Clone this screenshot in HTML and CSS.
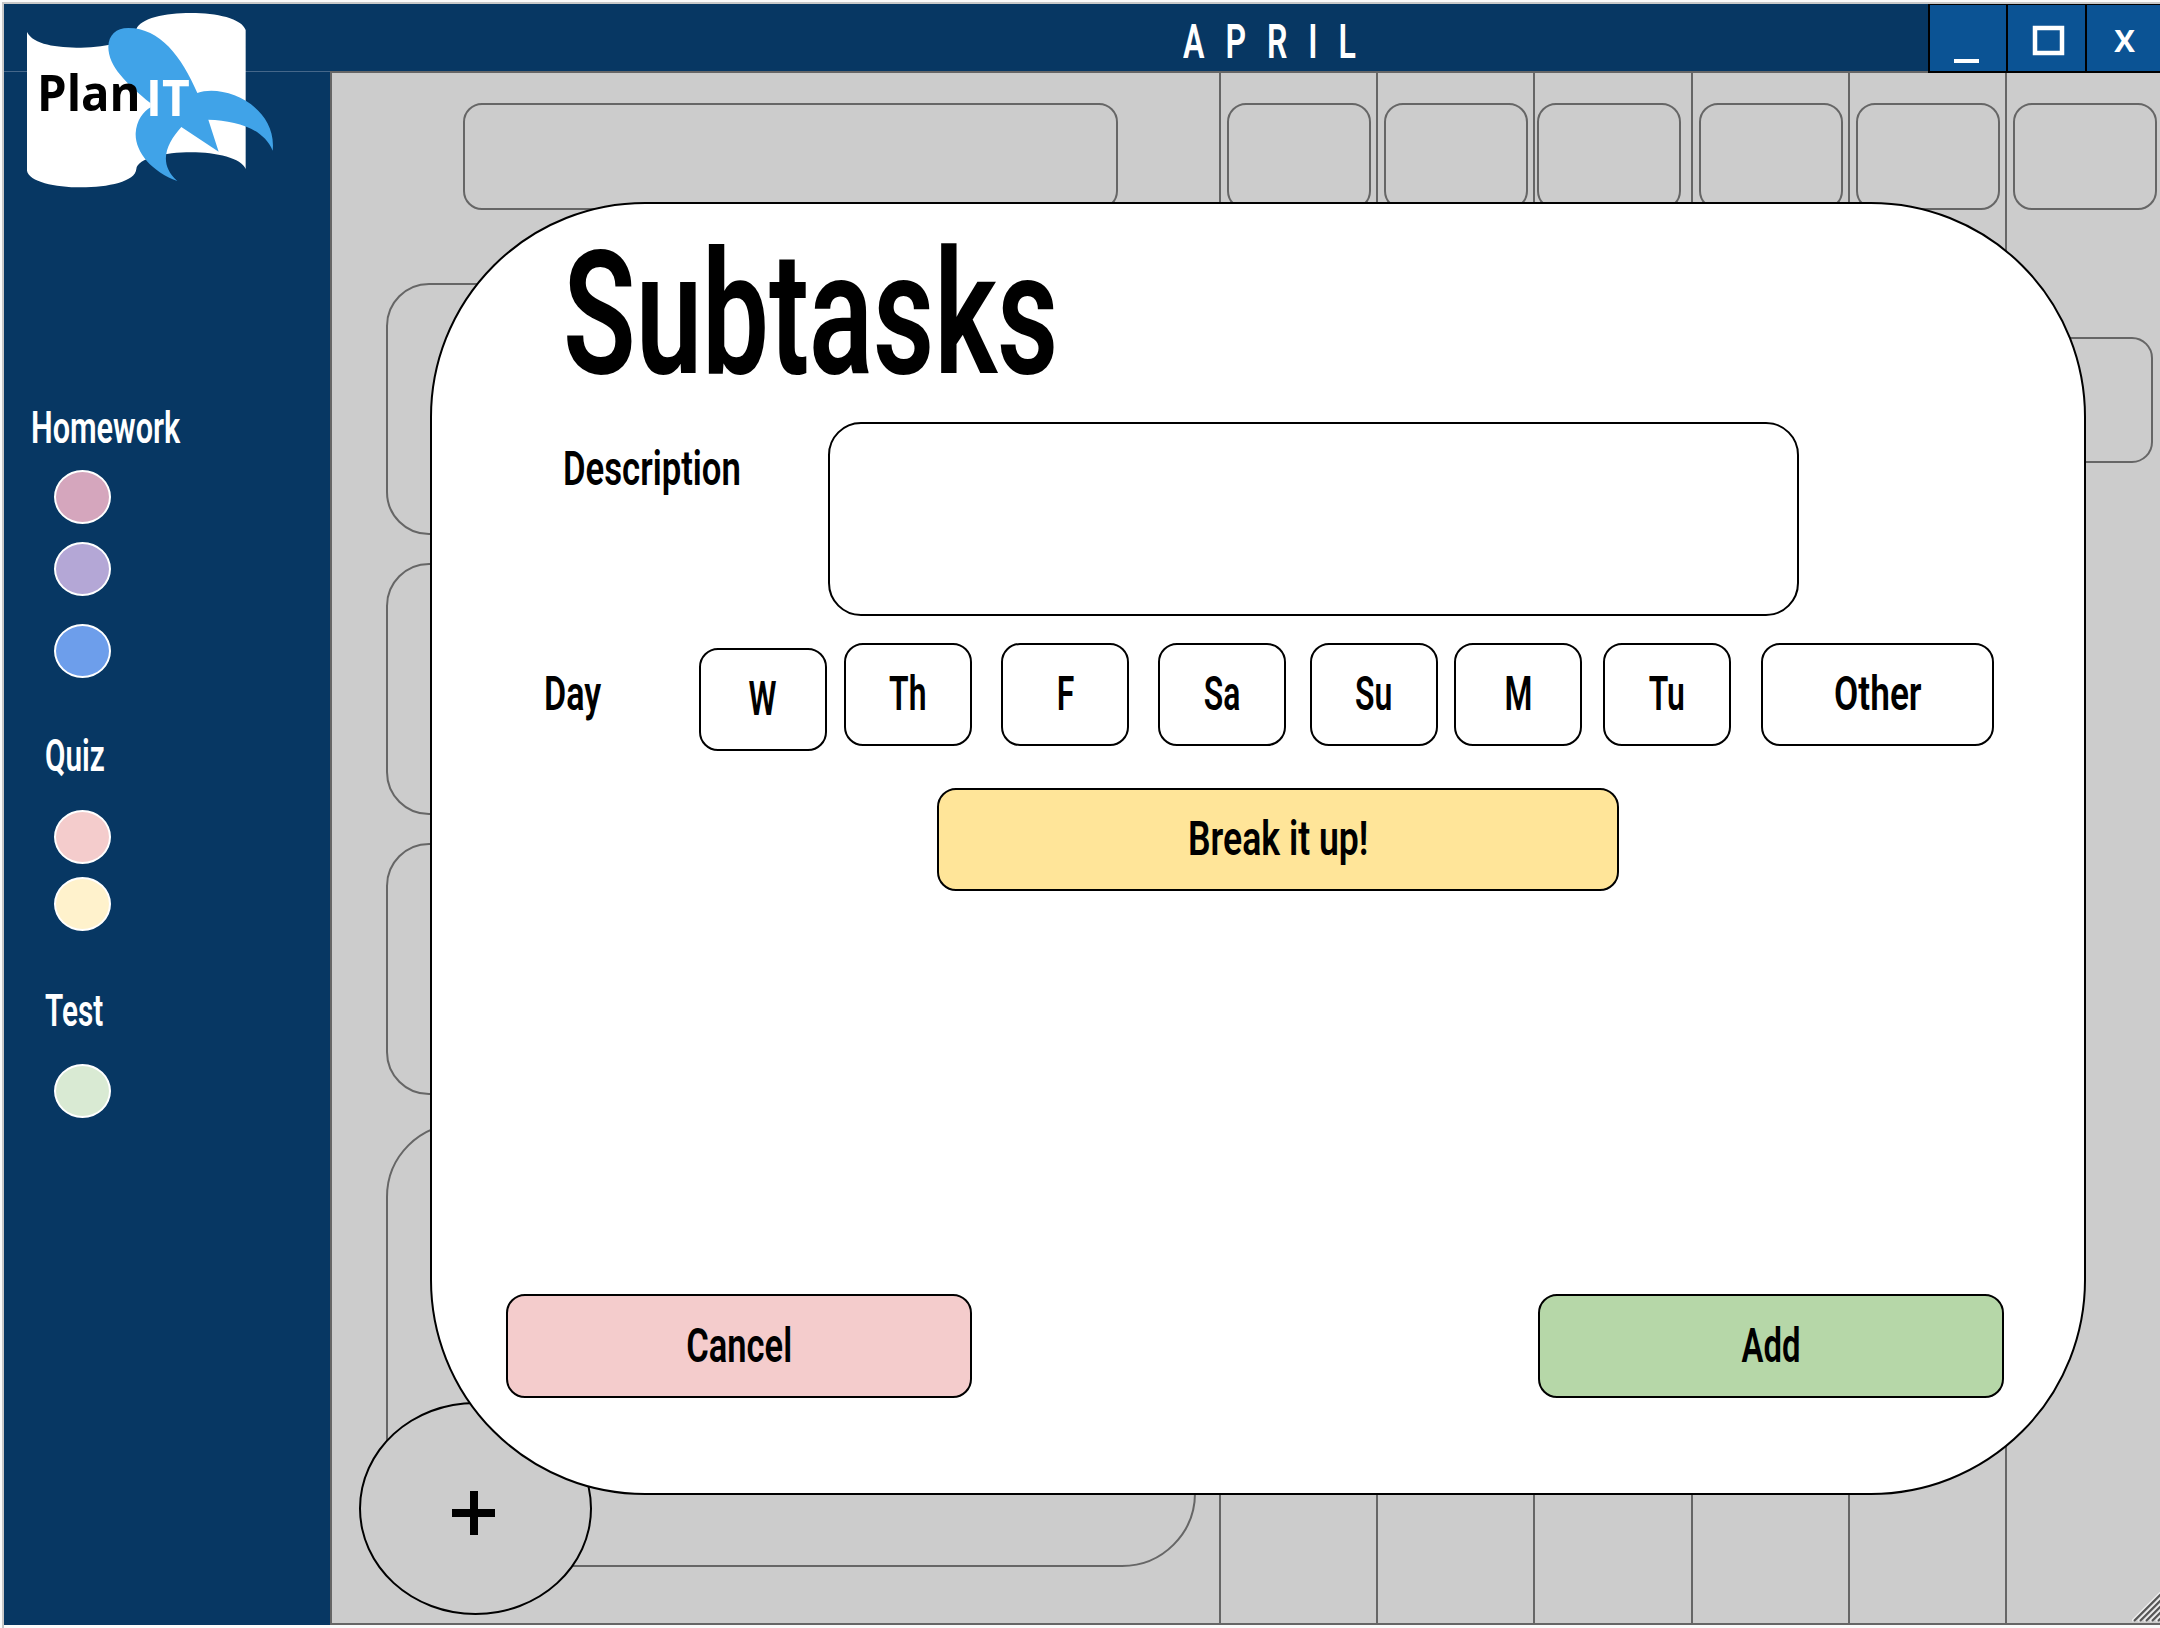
FILE: index.html
```html
<!DOCTYPE html>
<html lang="en">
<head>
<meta charset="utf-8">
<title>PlanIT</title>
<link rel="stylesheet" href="styles.css">
</head>
<body>
<div class="window">
  <header class="titlebar">
    <h1 class="month"><span class="t t-april">APRIL</span></h1>
    <div class="controls">
      <button class="control"><svg width="76" height="66" viewBox="0 0 76 66"><path d="M24 56h25" stroke="#fff" stroke-width="4"/></svg></button>
      <button class="control control-max"><svg width="77" height="66" viewBox="0 0 77 66"><rect x="27" y="23" width="27" height="25" fill="none" stroke="#fff" stroke-width="4.5"/></svg></button>
      <button class="control control-close">X</button>
    </div>
  </header>

  <aside class="sidebar">
    <h2 class="group group-homework"><span class="t t-homework">Homework</span></h2>
    <i class="dot dot-rose"></i>
    <i class="dot dot-violet"></i>
    <i class="dot dot-blue"></i>
    <h2 class="group group-quiz"><span class="t t-quiz">Quiz</span></h2>
    <i class="dot dot-pink"></i>
    <i class="dot dot-cream"></i>
    <h2 class="group group-test"><span class="t t-test">Test</span></h2>
    <i class="dot dot-green"></i>
  </aside>

  <main class="board">
    <section class="tasks">
      <div class="search"></div>
      <div class="card"></div>
      <div class="card"></div>
      <div class="card"></div>
      <div class="card card-large"></div>
    </section>
    <section class="day"><div class="date"></div></section>
    <section class="day"><div class="date"></div></section>
    <section class="day day-tight"><div class="date"></div></section>
    <section class="day"><div class="date"></div></section>
    <section class="day"><div class="date"></div></section>
    <section class="day"><div class="date"></div><div class="event"></div></section>
  </main>

  <svg class="logo" width="280" height="200" viewBox="0 0 840 600">
    <path fill="#fff" d="M81 96C100 134 170 143 243 143C325 143 400 122 409 88C420 55 495 39 573 39C650 39 725 55 737 90V507C725 475 650 457 573 457C495 457 412 475 409 507C406 545 325 562 243 562C165 562 86 545 81 512Z"/>
    <path fill="#40a3e8" d="M325 140C326 105 348 84 385 84C480 84 545 170 592 279C675 250 832 320 818 452C790 385 710 362 625 359L656 455L544 381C500 430 472 490 532 543C455 515 405 455 407 400C409 362 430 335 452 322V310C380 250 325 200 325 140Z"/>
    <text class="logo-plan" x="111" y="333" textLength="311" lengthAdjust="spacingAndGlyphs">Plan</text>
    <text class="logo-it" x="438" y="348" textLength="131" lengthAdjust="spacingAndGlyphs">IT</text>
  </svg>

  <button class="add-round"><svg width="44" height="44" viewBox="0 0 44 44"><path d="M22 0v44M0 22h43" stroke="#000" stroke-width="8"/></svg></button>
  <svg class="grip" width="28" height="30" viewBox="0 0 28 30"><path d="M0 29L29 0M6 29L35 0M12 29L41 0M18 29L47 0M24 29L53 0" stroke="#eee" stroke-width="2"/><path d="M2 29L31 0M8 29L37 0M14 29L43 0M20 29L49 0M26 29L55 0" stroke="#555" stroke-width="2"/></svg>

  <div class="modal">
    <h2 class="modal-title"><span class="t t-title">Subtasks</span></h2>
    <div class="row-description">
      <label><span class="t t-description">Description</span></label>
      <div class="textarea"></div>
    </div>
    <div class="row-day">
      <label><span class="t t-day">Day</span></label>
      <button class="btn btn-low"><span class="t">W</span></button>
      <button class="btn"><span class="t">Th</span></button>
      <button class="btn"><span class="t">F</span></button>
      <button class="btn"><span class="t">Sa</span></button>
      <button class="btn"><span class="t">Su</span></button>
      <button class="btn"><span class="t">M</span></button>
      <button class="btn"><span class="t">Tu</span></button>
      <button class="btn"><span class="t t-other">Other</span></button>
    </div>
    <button class="btn btn-break"><span class="t t-break">Break it up!</span></button>
    <div class="actions">
      <button class="btn btn-cancel"><span class="t t-cancel">Cancel</span></button>
      <button class="btn btn-add"><span class="t t-add">Add</span></button>
    </div>
  </div>
</div>
</body>
</html>
```

FILE: styles.css
```css
* { box-sizing: border-box; }

body {
  margin: 0;
  padding: 2px 0 0 2px;
  background: #fafafa;
  font-family: Roboto, "Liberation Sans", sans-serif;
}

h1, h2 { margin: 0; font-weight: 600; }

button {
  padding: 0;
  margin: 0;
  border: 0;
  color: inherit;
  font: inherit;
}

svg { display: block; }

/* Narrow display lettering */
.t {
  display: inline-block;
  white-space: nowrap;
  line-height: 1;
  transform: scaleX(.65);
}

.t-homework { transform: scaleX(.696); }
.t-quiz, .t-test { transform: scaleX(.675); }
.t-day { transform: scaleX(.695); }
.t-title { transform: scaleX(.688); }
.t-description { transform: scaleX(.708); }
.t-other { transform: scaleX(.72); }
.t-break { transform: scaleX(.726); }
.t-cancel { transform: scaleX(.704); }
.t-add { transform: scaleX(.67); }

.window {
  position: relative;
  display: grid;
  grid-template: 67px 1554px / 326px 1fr;
  width: 2158px;
  height: 1626px;
  border: solid #c8c8c8;
  border-width: 2px 0 0 2px;
  overflow: hidden;
}

.titlebar {
  grid-column: 1 / -1;
  display: flex;
  justify-content: space-between;
  background: #073763;
  color: #fff;
}

.month {
  padding: 13px 0 0 1179px;
  font-size: 49px;
  height: 60px;
  line-height: 1;
}

.t-april {
  width: 300px;
  letter-spacing: 32px;
  transform: scaleX(.655);
  transform-origin: left;
}

.controls {
  position: relative;
  display: flex;
  width: 232px;
  height: 70px;
  margin-top: -1px;
  border: solid #000;
  border-width: 2px 0 2px 2px;
  background: #0b5394;
}

.control { flex: none; width: 76px; background: none; }
.control + .control { border-left: 2px solid #000; }
.control-max { width: 79px; }

.control-close {
  flex: 1;
  padding: 3px 0 0 2px;
  font: 700 31px "Open Sans", sans-serif;
}

.sidebar {
  background: #073763;
  border-top: 1px solid #45678a;
  color: #fff;
}

.group { font-size: 44px; height: 44px; line-height: 1; }
.group .t { transform-origin: left; }
.group-homework { margin: 334px 0 0 27px; }
.group-quiz { margin: 56px 0 0 41px; }
.group-test { margin: 58px 0 0 41px; }

.dot {
  display: block;
  width: 57px;
  height: 54px;
  margin-left: 50px;
  border: 2px solid #fff;
  border-radius: 50%;
}

.dot-rose { background: #d5a6bd; margin-top: 20px; }
.dot-violet { background: #b4a7d6; margin-top: 18px; }
.dot-blue { background: #6d9eeb; margin-top: 28px; }
.dot-pink { background: #f4cccc; margin-top: 32px; }
.dot-cream { background: #fff2cc; margin-top: 13px; }
.dot-green { background: #d9ead3; margin-top: 31px; }

.board {
  display: grid;
  grid-template-columns: 887px 157px 157px 158px 157px 157px 1fr;
  background: #ccc;
  border: 2px solid #666;
  border-right: 0;
}

.tasks { padding: 30px 0 0 54px; }

.search {
  width: 655px;
  height: 107px;
  margin-left: 77px;
  border: 2px solid #666;
  border-radius: 19px;
}

.card {
  width: 810px;
  height: 252px;
  margin-top: 28px;
  border: 2px solid #666;
  border-radius: 43px;
}

.search + .card { margin-top: 73px; }
.card-large { height: 444px; border-radius: 74px; }

.day {
  padding: 30px 0 0 6px;
  border-left: 2px solid #666;
}

.day-tight { padding-left: 2px; }

.date {
  width: 144px;
  height: 107px;
  border: 2px solid #666;
  border-radius: 19px;
}

.event {
  width: 140px;
  height: 126px;
  margin-top: 127px;
  border: 2px solid #666;
  border-radius: 21px;
}

.logo { position: absolute; left: -4px; top: -4px; }

.logo-plan, .logo-it {
  font-family: "Open Sans", Lato, sans-serif;
  font-size: 151px;
  font-weight: 700;
}

.logo-plan { fill: #000; }
.logo-it { fill: #fff; }

.add-round {
  position: absolute;
  left: 355px;
  top: 1398px;
  width: 233px;
  height: 213px;
  padding: 9px 0 0 91px;
  border: 2px solid #000;
  border-radius: 50%;
  background: #ccc;
}

.grip { position: absolute; right: 0; bottom: 6px; }

.modal {
  position: absolute;
  left: 426px;
  top: 198px;
  width: 1656px;
  height: 1293px;
  display: flex;
  flex-direction: column;
  padding: 24px 0 95px;
  border: 2px solid #000;
  border-radius: 215px;
  background: #fff;
  color: #000;
  font-size: 49px;
  font-weight: 600;
}

.modal-title {
  height: 173px;
  padding-left: 131px;
  font-size: 173px;
  line-height: 1;
}

.t-title, .modal label .t { transform-origin: left; }

.row-description {
  display: flex;
  height: 194px;
  margin: 21px 0 27px;
}

.row-description label { width: 396px; padding: 22px 0 0 131px; }
.row-description label, .row-day label { line-height: 1; }

.textarea {
  width: 971px;
  border: 2px solid #000;
  border-radius: 33px;
}

.row-day {
  display: grid;
  grid-template-columns: 267px 145px 157px 157px 152px 144px 149px 158px 233px;
  align-items: start;
  height: 108px;
}

.row-day label { padding: 26px 0 0 112px; }

.btn {
  display: flex;
  align-items: center;
  justify-content: center;
  width: 128px;
  height: 103px;
  padding-bottom: 2px;
  border: 2px solid #000;
  border-radius: 19px;
  background: #fff;
}

.btn:last-child { width: 233px; }
.btn-low { margin-top: 5px; }

.btn-break {
  width: 682px;
  margin: 37px 0 0 505px;
  background: #ffe599;
}

.actions {
  display: flex;
  gap: 566px;
  margin-top: auto;
  padding-left: 74px;
}

.actions .btn { width: 466px; height: 104px; }
.btn-cancel { background: #f4cccc; }
.actions .btn-add { background: #b6d7a8; }
```
